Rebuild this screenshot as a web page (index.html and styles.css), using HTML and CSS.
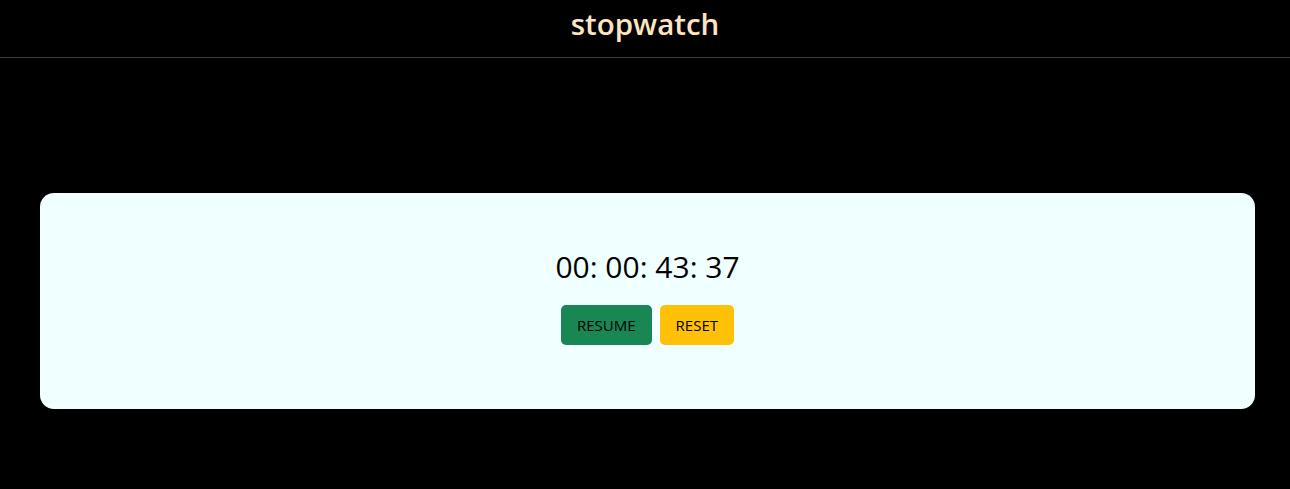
FILE: index.html
```html
<!DOCTYPE html>
<html lang="en">
<head>
<meta charset="utf-8">
<title>stopwatch</title>
<link rel="stylesheet" href="styles.css">
</head>
<body>
<header class="header">
  <h1 class="title">stopwatch</h1>
</header>
<main class="main">
  <section class="card">
    <div class="time">00: 00: 43: 37</div>
    <div class="actions">
      <button class="btn btn-resume" type="button">RESUME</button>
      <button class="btn btn-reset" type="button">RESET</button>
    </div>
  </section>
</main>
</body>
</html>
```
FILE: styles.css
```css
* { box-sizing: border-box; }
html, body {
  margin: 0;
  padding: 0;
  background: #000;
  height: 100%;
}
body {
  font-family: "Open Sans", "Noto Sans", sans-serif;
  color: #000;
}
.header {
  height: 58px;
  border-bottom: 1px solid #3f3f3f;
  display: flex;
  align-items: center;
  justify-content: center;
}
.title {
  margin: 0;
  margin-top: -10px;
  font-size: 29.5px;
  font-weight: 600;
  color: #ffe4c4;
  letter-spacing: 0;
}
.main {
  padding: 135px 35px 0 40px;
}
.card {
  background: #f0ffff;
  border-radius: 14px;
  height: 216px;
  padding-top: 56px;
  display: flex;
  flex-direction: column;
  align-items: center;
}
.time {
  font-size: 30px;
  line-height: 36px;
  font-weight: 400;
}
.actions {
  display: flex;
  gap: 8px;
  margin-top: 20px;
}
.btn {
  font-family: inherit;
  font-size: 15px;
  line-height: 20px;
  height: 40px;
  padding: 0 16px;
  border: none;
  border-radius: 5px;
  color: #000;
  cursor: pointer;
}
.btn-resume { background: #198754; }
.btn-reset { background: #ffc107; }
```
